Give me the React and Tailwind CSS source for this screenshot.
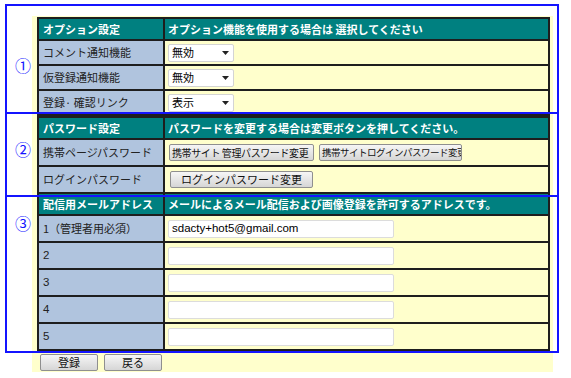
import React from "react";

const jp = { fontFamily: '"Noto Sans CJK JP", "Liberation Sans", sans-serif' };
const latin = { fontFamily: '"Liberation Sans", Arial, sans-serif' };

const Head = ({ left, right }) => (
  <div className="grid grid-cols-[124px_383px] gap-[2px] h-[20px]">
    <div className="bg-[#008080] text-white font-bold text-[11px] px-[4px] flex items-center whitespace-nowrap">{left}</div>
    <div className="bg-[#008080] text-white font-bold text-[11px] px-[3px] flex items-center whitespace-nowrap">{right}</div>
  </div>
);

const Row = ({ label, h = "h-[23px]", children }) => (
  <div className={`grid grid-cols-[124px_383px] gap-[2px] ${h}`}>
    <div className="bg-[#b0c4de] text-[#222] text-[11px] px-[4px] flex items-center whitespace-nowrap">{label}</div>
    <div className="bg-[#ffffcc] px-[3px] flex items-center">{children}</div>
  </div>
);

const Select = ({ value }) => (
  <div className="w-[66px] h-[18px] bg-white border border-[#d4d4d4] rounded-[2px] flex items-center justify-between px-[3px] text-[11px] text-black">
    <span>{value}</span>
    <svg width="7" height="4" viewBox="0 0 7 4" className="mr-[1px]">
      <path d="M0 0h7L3.5 4z" fill="#222" />
    </svg>
  </div>
);

const Btn = ({ children, w, className = "" }) => (
  <div
    className={`h-[17px] bg-gradient-to-b from-[#f6f6f6] to-[#d6d6d6] border border-[#8f8f8f] rounded-[2px] text-[#111] flex items-center overflow-hidden whitespace-nowrap ${w} ${className}`}
  >
    {children}
  </div>
);

const Input = ({ value = "" }) => (
  <div
    className="w-[226px] h-[18px] bg-white border border-[#dcdcdc] rounded-[2px] px-[3px] flex items-center text-[11.5px] text-black"
    style={latin}
  >
    {value}
  </div>
);

export default function App() {
  return (
    <div className="relative w-[571px] h-[378px] bg-white overflow-hidden" style={jp}>
      <div className="ml-[32px] mt-[16px] w-[521px] bg-[#ffffcc] pt-[1px] pb-[1px]">
        <div className="ml-[5px] w-[513px] border-2 border-[#1e1e1e] bg-[#1e1e1e] flex flex-col gap-[2px]">
          <Head left="オプション設定" right="オプション機能を使用する場合は 選択してください" />
          <Row label="コメント通知機能">
            <Select value="無効" />
          </Row>
          <Row label="仮登録通知機能">
            <Select value="無効" />
          </Row>
          <Row label="登録· 確認リンク">
            <Select value="表示" />
          </Row>
        </div>

        <div className="ml-[5px] w-[513px] border-2 border-[#1e1e1e] bg-[#1e1e1e] flex flex-col gap-[2px]">
          <Head left="パスワード設定" right="パスワードを変更する場合は変更ボタンを押してください。" />
          <Row label="携帯ページパスワード" h="h-[25px]">
            <div className="flex gap-[5px] pl-[1px]">
              <Btn w="w-[145px]" className="px-[2px] text-[10px] tracking-[-0.4px]">携帯サイト 管理パスワード変更</Btn>
              <Btn w="w-[143px]" className="px-[2px] text-[9.5px] tracking-[-0.5px]">携帯サイトログインパスワード変更</Btn>
            </div>
          </Row>
          <Row label="ログインパスワード" h="h-[25px]">
            <Btn w="w-[143px]" className="ml-[2px] justify-center text-[11px]">ログインパスワード変更</Btn>
          </Row>
          <Head left="配信用メールアドレス" right="メールによるメール配信および画像登録を許可するアドレスです。" />
          <Row label="1（管理者用必須）" h="h-[25px]">
            <Input value="sdacty+hot5@gmail.com" />
          </Row>
          {["2", "3", "4", "5"].map((n) => (
            <Row key={n} label={<span style={latin} className="text-[11.5px]">{n}</span>} h="h-[25px]">
              <Input />
            </Row>
          ))}
        </div>

        <div className="flex gap-[6px] pl-[8px] mt-[3px]">
          <Btn w="w-[58px]" className="justify-center text-[11px]">登録</Btn>
          <Btn w="w-[58px]" className="justify-center text-[11px]">戻る</Btn>
        </div>
      </div>

      {/* annotation frames */}
      <div className="absolute left-[5px] top-[4px] w-[554px] h-[110px] border-2 border-[#1414ff]">
        <span className="absolute left-[8px] top-[51px] text-[16px] leading-none text-[#1414ff]">①</span>
      </div>
      <div className="absolute left-[5px] top-[112px] w-[554px] h-[85px] border-2 border-[#1414ff]">
        <span className="absolute left-[8px] top-[27px] text-[16px] leading-none text-[#1414ff]">②</span>
      </div>
      <div className="absolute left-[5px] top-[195px] w-[554px] h-[158px] border-2 border-[#1414ff]">
        <span className="absolute left-[8px] top-[18px] text-[16px] leading-none text-[#1414ff]">③</span>
      </div>
    </div>
  );
}
